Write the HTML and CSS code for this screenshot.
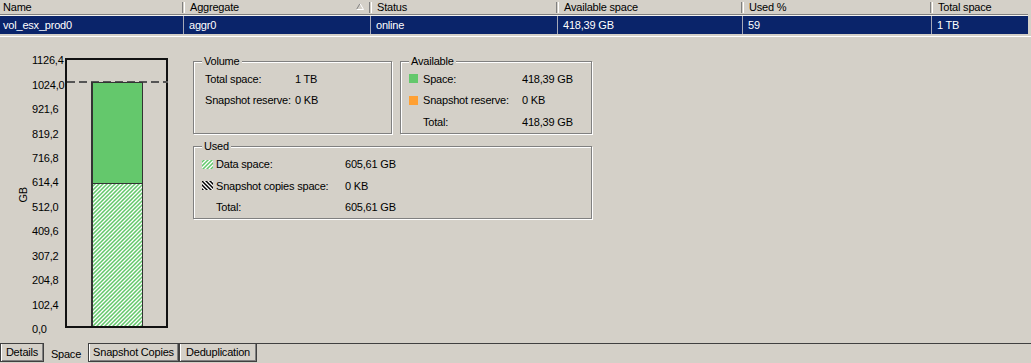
FILE: index.html
```html
<!DOCTYPE html>
<html lang="en">
<head>
    <meta charset="UTF-8">
    <title>Volume space</title>
    <link rel="stylesheet" href="styles.css">
</head>
<body>
    <svg class="defs" width="0" height="0">
        <defs>
            <pattern id="hatch-green" width="4" height="4" patternUnits="userSpaceOnUse">
                <rect width="4" height="4" fill="#64c86c"/>
                <path d="M0 4 L4 0 M-1 1 L1 -1 M3 5 L5 3" stroke="#ffffff" stroke-width="1.3"/>
            </pattern>
            <pattern id="hatch-black" width="4" height="4" patternUnits="userSpaceOnUse">
                <rect width="4" height="4" fill="#ffffff"/>
                <path d="M0 0 L4 4 M-1 3 L1 5 M3 -1 L5 1" stroke="#000000" stroke-width="1.5"/>
            </pattern>
        </defs>
    </svg>

    <div class="list">
        <div class="list-head">
            <div class="col c-name">Name</div>
            <div class="col c-aggr">
                <span>Aggregate</span>
                <svg class="sort-arrow" width="8" height="7" viewBox="0 0 8 7">
                    <path d="M4 0.5 L0.5 6.5" stroke="#808080" fill="none"/>
                    <path d="M4 0.5 L7.5 6.5 H0.5" stroke="#ffffff" fill="none"/>
                </svg>
            </div>
            <div class="col c-status">Status</div>
            <div class="col c-avail">Available space</div>
            <div class="col c-used">Used %</div>
            <div class="col c-total">Total space</div>
        </div>
        <div class="list-row selected">
            <div class="col c-name">vol_esx_prod0</div>
            <div class="col c-aggr">aggr0</div>
            <div class="col c-status">online</div>
            <div class="col c-avail">418,39 GB</div>
            <div class="col c-used">59</div>
            <div class="col c-total">1 TB</div>
        </div>
    </div>

    <div class="content">
        <div class="chart">
            <div class="axis-title"><span>GB</span></div>
            <div class="axis-labels">
                <span>1126,4</span>
                <span>1024,0</span>
                <span>921,6</span>
                <span>819,2</span>
                <span>716,8</span>
                <span>614,4</span>
                <span>512,0</span>
                <span>409,6</span>
                <span>307,2</span>
                <span>204,8</span>
                <span>102,4</span>
                <span>0,0</span>
            </div>
            <div class="plot">
                <div class="limit-line"></div>
                <div class="bar">
                    <div class="seg free" style="height: 100px"></div>
                    <svg class="seg data" width="49" height="142"><rect width="49" height="142" fill="url(#hatch-green)"/></svg>
                </div>
            </div>
        </div>

        <div class="panels">
            <div class="panel-row">
                <fieldset class="group group-volume">
                    <legend>Volume</legend>
                    <div class="row plain"><span class="label">Total space:</span><span class="value">1 TB</span></div>
                    <div class="row plain"><span class="label">Snapshot reserve:</span><span class="value">0 KB</span></div>
                </fieldset>
                <fieldset class="group group-avail">
                    <legend>Available</legend>
                    <div class="row"><span class="icon"><span class="swatch green"></span></span><span class="label">Space:</span><span class="value">418,39 GB</span></div>
                    <div class="row"><span class="icon"><span class="swatch orange"></span></span><span class="label">Snapshot reserve:</span><span class="value">0 KB</span></div>
                    <div class="row"><span class="icon"></span><span class="label">Total:</span><span class="value">418,39 GB</span></div>
                </fieldset>
            </div>
            <fieldset class="group group-used">
                <legend>Used</legend>
                <div class="row"><span class="icon"><svg class="swatch hatch" width="11" height="9"><rect width="11" height="9" fill="url(#hatch-green)"/></svg></span><span class="label">Data space:</span><span class="value">605,61 GB</span></div>
                <div class="row"><span class="icon"><svg class="swatch hatch" width="11" height="9"><rect width="11" height="9" fill="url(#hatch-black)"/></svg></span><span class="label">Snapshot copies space:</span><span class="value">0 KB</span></div>
                <div class="row"><span class="icon"></span><span class="label">Total:</span><span class="value">605,61 GB</span></div>
            </fieldset>
        </div>
    </div>

    <div class="tabs">
        <div class="tab t-details">Details</div>
        <div class="tab t-space active">Space</div>
        <div class="tab t-snap">Snapshot Copies</div>
        <div class="tab t-dedup">Deduplication</div>
    </div>
</body>
</html>
```

FILE: styles.css
```css
body {
    font-family: 'Liberation Sans', Arial, sans-serif;
    font-size: 11px;
    letter-spacing: -0.2px;
    color: #000;
    background-color: #d4d0c8;
    margin: 0;
    padding: 0;
    width: 1031px;
    height: 363px;
    overflow: hidden;
    display: flex;
    flex-direction: column;
}

.defs {
    position: absolute;
}

/* list view */

.list {
    padding-bottom: 2px;
    border-bottom: 1px solid #ffffff;
}

.list-head,
.list-row {
    display: flex;
    width: 1028px;
}

.list-head {
    height: 14px;
    border-bottom: 1px solid #808080;
}

.list-row {
    height: 18px;
    border-top: 1px solid #f4f3ef;
}

.list-row.selected {
    background-color: #0a246a;
    color: #fff;
}

.col {
    position: relative;
    box-sizing: border-box;
    padding-left: 6px;
    display: flex;
    align-items: center;
    white-space: nowrap;
}

.list-head .col::after {
    content: "";
    position: absolute;
    right: -1px;
    top: 2px;
    bottom: 1px;
    width: 1px;
    border-left: 1px solid #808080;
    border-right: 1px solid #ffffff;
}

.list-head .c-total::after {
    display: none;
}

.list-row .col {
    border-right: 1px solid #a6a9b8;
}

.list-row .c-total {
    border-right: none;
}

.c-name { width: 184px; padding-left: 3px; }
.c-aggr { width: 187px; justify-content: space-between; padding-right: 7px; }
.c-status { width: 187px; }
.c-avail { width: 185px; }
.c-used { width: 189px; }
.c-total { width: 96px; }

.list-row .c-aggr,
.list-row .c-status,
.list-row .c-avail,
.list-row .c-used,
.list-row .c-total {
    padding-left: 5px;
}

.sort-arrow {
    display: block;
    margin-top: -1px;
}

/* content */

.content {
    flex: 1;
    display: flex;
}

.chart {
    width: 193px;
    display: flex;
}

.axis-title {
    width: 32px;
    box-sizing: border-box;
    padding: 10px 3px 0 0;
    display: flex;
    align-items: center;
    justify-content: flex-end;
}

.axis-title span {
    writing-mode: vertical-rl;
    transform: rotate(180deg);
    line-height: 11px;
}

.axis-labels {
    width: 33px;
    padding-top: 11px;
    display: flex;
    flex-direction: column;
}

.axis-labels span {
    height: 24.45px;
    display: flex;
    align-items: center;
}

.plot {
    position: relative;
    box-sizing: border-box;
    width: 103px;
    height: 270px;
    margin-top: 21px;
    border: 2px solid #111;
    padding-left: 24px;
    display: flex;
    align-items: flex-end;
}

.limit-line {
    position: absolute;
    left: 0;
    right: -2px;
    top: 21px;
    height: 2px;
    background: repeating-linear-gradient(90deg, #555 0 8px, transparent 8px 12px);
}

.bar {
    position: relative;
    box-sizing: border-box;
    width: 52px;
    border-top: 1px solid #333;
    border-left: 2px solid #333;
    border-right: 1px solid #333;
    display: flex;
    flex-direction: column;
}

.seg {
    display: block;
    flex: none;
}

.seg.free {
    background-color: #64c86c;
    border-bottom: 1px solid #333;
}

/* group boxes */

.panels {
    width: 399px;
    padding-top: 18px;
}

.panel-row {
    display: flex;
    gap: 8px;
}

.group {
    margin: 0;
    min-width: 0;
    box-sizing: border-box;
    padding: 0 8px 0 8px;
    border: 1px solid #808080;
    box-shadow: inset 1px 1px 0 #ffffff, 1px 1px 0 #ffffff;
}

.group legend {
    padding: 0 2px;
    line-height: 13px;
    background-color: #d4d0c8;
}

.group-volume { width: 199px; }
.group-avail { width: 192px; }
.group-used { width: 399px; margin-top: 6px; padding-top: 1px; }

.row {
    height: 21.5px;
    display: flex;
    align-items: center;
    white-space: nowrap;
}

.row.plain {
    padding-left: 3px;
}

.icon {
    width: 14px;
    display: flex;
    align-items: center;
}

.swatch {
    display: block;
    width: 9px;
    height: 9px;
}

.swatch.green { background-color: #64c86c; }
.swatch.orange { background-color: #ffa033; }

.swatch.hatch {
    width: 11px;
}

.group-volume .label { width: 90px; }
.group-avail .label { width: 99px; }
.group-used .label { width: 129px; }

/* tabs */

.tabs {
    height: 19px;
    border-top: 1px solid #404040;
    display: flex;
    align-items: flex-start;
}

.tab {
    box-sizing: border-box;
    height: 18px;
    border: 1px solid #404040;
    border-top: none;
    box-shadow: inset 1px 0 0 #ffffff, inset -1px -1px 0 #808080;
    text-align: center;
    line-height: 17px;
    white-space: nowrap;
}

.tab.active {
    margin-top: -1px;
    height: 20px;
    border: none;
    box-shadow: none;
    background-color: #d4d0c8;
    line-height: 23px;
}

.t-details { width: 44px; }
.t-space { width: 44px; }
.t-snap { width: 91px; }
.t-dedup { width: 78px; }
```
